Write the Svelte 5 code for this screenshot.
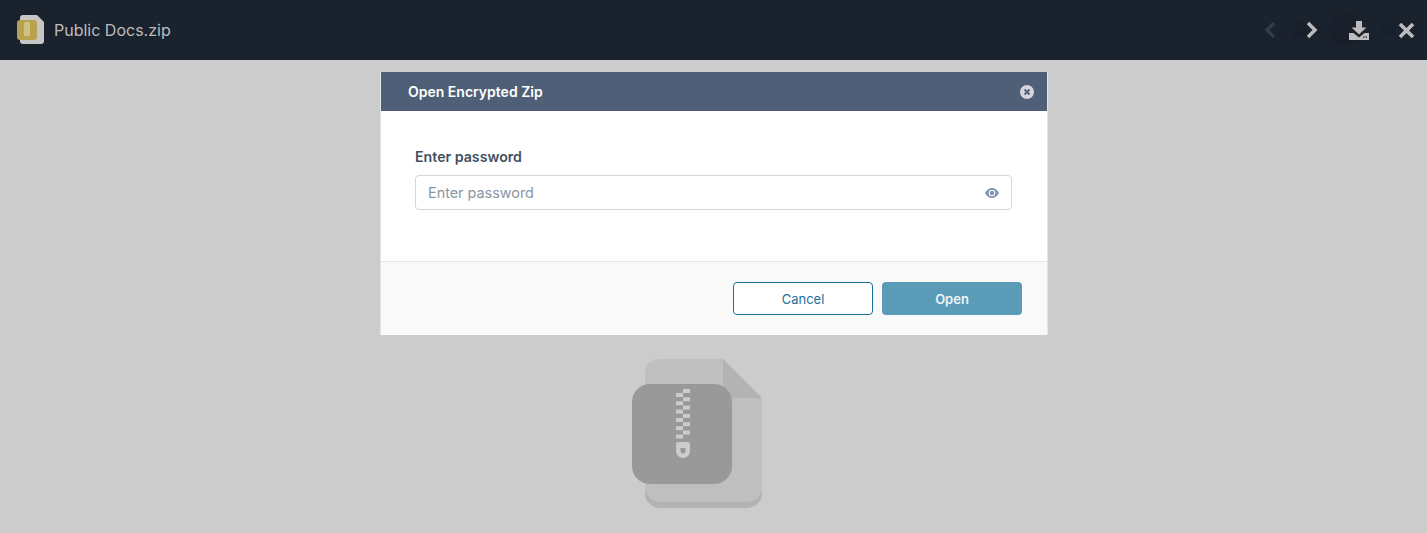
<script lang="ts">
	let password = $state('');
	let showPassword = $state(false);
</script>

<div class="viewer">
	<header class="topbar">
		<div class="file">
			<svg class="file-icon" width="28" height="30" viewBox="0 0 28 30">
				<path d="M6 0H20L27 7V26a3 3 0 0 1-3 3H6a3 3 0 0 1-3-3V3a3 3 0 0 1 3-3Z" fill="#c6c6c6" />
				<rect x="0" y="5" width="20" height="20" rx="3" fill="#b9a24e" />
				<rect x="7" y="7" width="6" height="14" rx="1.500" fill="#d0c283" />
			</svg>
			<span class="file-name">Public Docs.zip</span>
		</div>
		<nav class="actions">
			<svg class="ghost" width="110" height="36" viewBox="0 0 110 36">
				<path d="M3 25c2-2 3-4 3-9a6 6 0 0 1 12 0c0 5 1 7 3 9Z" fill="#181f2a" />
				<circle cx="56" cy="18" r="16" fill="#181f2a" />
				<rect x="90" y="12" width="18" height="11" fill="#181f2a" opacity=".6" />
			</svg>
			<svg class="prev" width="14" height="18" viewBox="0 0 14 18"><path d="M11 2 4 9l7 7" fill="none" stroke="#343c48" stroke-width="3.400" /></svg>
			<svg class="next" width="14" height="18" viewBox="0 0 14 18"><path d="M3 2l7 7-7 7" fill="none" stroke="#bdbdbd" stroke-width="3.400" /></svg>
			<svg class="download" width="20" height="19" viewBox="0 0 20 19">
				<path d="M7 0h6v6.500h4.500L10 13.500 2.500 6.500H7Z" fill="#bdbdbd" />
				<path d="M0 12h4.500l5.500 4.500 5.500-4.500H20v7H0Z" fill="#bdbdbd" />
				<rect x="14" y="15.500" width="1.500" height="1.200" fill="#1a222e" />
				<rect x="16.500" y="15.500" width="1.500" height="1.200" fill="#1a222e" />
			</svg>
			<svg class="close" width="17" height="17" viewBox="0 0 17 17"><path d="M2 2l13 13M15 2 2 15" stroke="#bdbdbd" stroke-width="3.600" /></svg>
		</nav>
	</header>

	<main class="stage">
		<section class="modal">
			<div class="modal-head">
				<h2>Open Encrypted Zip</h2>
				<button class="modal-close" aria-label="Close">
					<svg width="14" height="14" viewBox="0 0 14 14">
						<circle cx="7" cy="7" r="7" fill="#d3d7dd" />
						<path d="M4.500 4.500l5 5M9.500 4.500l-5 5" stroke="#4e5f77" stroke-width="1.800" />
					</svg>
				</button>
			</div>
			<div class="modal-body">
				<label for="pw">Enter password</label>
				<div class="field">
					<input id="pw" type={showPassword ? 'text' : 'password'} placeholder="Enter password" bind:value={password} />
					<button class="eye" aria-label="Show password" onclick={() => (showPassword = !showPassword)}>
						<svg width="14" height="10" viewBox="0 0 14 10">
							<path d="M0 5C2 1.700 4.300 0 7 0s5 1.700 7 5c-2 3.300-4.300 5-7 5S2 8.300 0 5Z" fill="#7f92b2" />
							<circle cx="7" cy="5" r="3.300" fill="#fff" />
							<circle cx="7" cy="5" r="2.200" fill="#7f92b2" />
						</svg>
					</button>
				</div>
			</div>
			<div class="modal-foot">
				<button class="btn cancel">Cancel</button>
				<button class="btn open">Open</button>
			</div>
		</section>

		<svg class="zip" width="130" height="149" viewBox="0 0 130 149">
			<path d="M13 14a14 14 0 0 1 14-14H91L130 39V134a15 15 0 0 1-15 15H28a15 15 0 0 1-15-15Z" fill="#bfbfbf" />
			<path d="M13 128v6a15 15 0 0 0 15 15H115a15 15 0 0 0 15-15v-6a15 15 0 0 1-15 15H28a15 15 0 0 1-15-15Z" fill="#b3b3b3" />
			<path d="M91 0 130 39H91Z" fill="#b3b3b3" />
			<rect x="0" y="25" width="100" height="100" rx="18" fill="#999999" />
			{#each [0, 1, 2, 3, 4, 5] as i}
				<rect x="51" y={30 + i * 8.300} width="7" height="4" fill="#cccccc" />
				<rect x="44" y={34 + i * 8.300} width="7" height="4" fill="#cccccc" />
			{/each}
			<path d="M46 83H56a2 2 0 0 1 2 2V92a7 7 0 0 1-14 0V85a2 2 0 0 1 2-2Z" fill="#cccccc" />
			<path d="M48.500 89H53.500V92a2.500 2.500 0 0 1-5 0Z" fill="#999999" />
		</svg>
	</main>
</div>

<style>
	:global(body) {
		background: #cccccc;
		font-family: Inter, 'Liberation Sans', sans-serif;
	}
	.viewer {
		height: 533px;
		overflow: hidden;
	}
	.topbar {
		height: 60px;
		background: #1a222e;
		display: flex;
		align-items: center;
		justify-content: space-between;
		padding: 0 12px 0 17px;
	}
	.file {
		display: flex;
		align-items: center;
		gap: 9px;
	}
	.file-name {
		font-size: 16px;
		color: #bdbdbd;
	}
	.actions {
		position: relative;
		display: flex;
		align-items: center;
	}
	.ghost {
		position: absolute;
		left: 26px;
		top: -9px;
	}
	.prev,
	.next,
	.download,
	.close {
		position: relative;
	}
	.next {
		margin-left: 28px;
	}
	.download {
		margin-left: 30px;
	}
	.close {
		margin-left: 29px;
	}
	.stage {
		display: flex;
		flex-direction: column;
		align-items: center;
		padding-top: 12px;
	}
	.modal {
		width: 668px;
		margin-left: 1px;
		box-sizing: border-box;
		border: solid #e4e4e4;
		border-width: 0 1px;
		background: #fff;
	}
	.modal-head {
		height: 39px;
		background: #4e5f77;
		display: flex;
		align-items: center;
		justify-content: space-between;
		padding: 0 13px 0 27px;
	}
	h2 {
		margin: 0;
		font-size: 14px;
		font-weight: 600;
		color: #fff;
	}
	.modal-close,
	.eye {
		border: 0;
		padding: 0;
		background: none;
		display: flex;
	}
	.modal-body {
		height: 150px;
		box-sizing: border-box;
		padding: 37px 34px 0;
	}
	label {
		display: block;
		font-size: 14.200px;
		font-weight: 600;
		line-height: 17px;
		color: #3f4f5f;
		margin-bottom: 10px;
	}
	.field {
		height: 35px;
		box-sizing: border-box;
		border: 1px solid #d3d5d8;
		border-radius: 4px;
		display: flex;
		align-items: center;
		padding: 0 12px;
		width: 597px;
	}
	input {
		flex: 1;
		min-width: 0;
		border: 0;
		outline: 0;
		padding: 0;
		font: inherit;
		font-size: 14.400px;
		color: #3f4d5f;
	}
	input::placeholder {
		color: #8b95a3;
		opacity: 1;
	}
	.modal-foot {
		height: 74px;
		box-sizing: border-box;
		border-top: 1px solid #e6e6e6;
		background: #f9f9f9;
		display: flex;
		justify-content: flex-end;
		align-items: center;
		gap: 9px;
		padding: 0 25px 0 0;
	}
	.btn {
		width: 140px;
		height: 33px;
		box-sizing: border-box;
		border-radius: 4px;
		font-family: inherit;
		font-size: 13px;
	}
	.cancel {
		background: #fff;
		border: 1px solid #1f6f9c;
		color: #1f6f9c;
	}
	.open {
		background: #5a9bb8;
		border: 0;
		color: #eef4f7;
		font-weight: 600;
	}
	.zip {
		margin-top: 24px;
		margin-right: 34px;
	}
</style>
